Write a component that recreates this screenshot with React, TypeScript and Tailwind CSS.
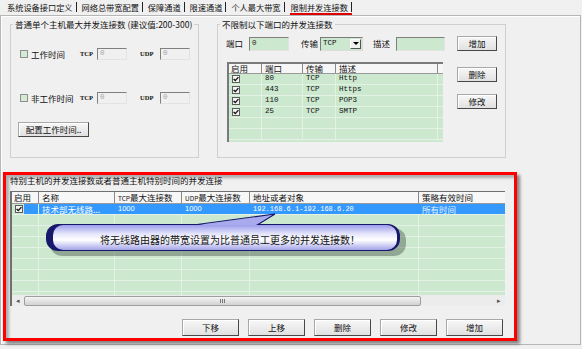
import React from "react";

const tabs = ["系统设备接口定义", "网络总带宽配置", "保障通道", "限速通道", "个人最大带宽", "限制并发连接数"];

const ports = [
  { port: "80", proto: "TCP", desc: "Http" },
  { port: "443", proto: "TCP", desc: "Https" },
  { port: "110", proto: "TCP", desc: "POP3" },
  { port: "25", proto: "TCP", desc: "SMTP" },
  null,
  null,
];

function Btn({ children, className = "" }: { children: React.ReactNode; className?: string }) {
  return (
    <div
      className={`flex items-center justify-center border border-[#a8a8a8] border-r-[#474747] border-b-[#474747] bg-gradient-to-b from-[#f7f7f7] to-[#e1e1e1] shadow-[inset_1px_1px_0_#fff] text-[8.5px] ${className}`}
    >
      {children}
    </div>
  );
}

function Check({ on, green }: { on?: boolean; green?: boolean }) {
  return (
    <div
      className={`w-[8px] h-[8px] shrink-0 flex items-center justify-center border ${
        green ? "border-[#8f8f8f] bg-[#d3ead3]" : "border-[#5c5c5c] bg-[#f4f4f4]"
      }`}
    >
      {on && (
        <svg width="6" height="6" viewBox="0 0 6 6">
          <path d="M0.6 2.9 L2.3 4.6 L5.4 1.1" stroke="#151515" strokeWidth="1.4" fill="none" />
        </svg>
      )}
    </div>
  );
}

function Field({ value, w, green }: { value?: string; w: string; green?: boolean }) {
  return (
    <div
      className={`${w} h-full flex items-center pl-[2px] border border-[#7f7f7f] border-r-[#e3e3e3] border-b-[#e3e3e3] font-['Liberation_Mono',monospace] text-[7.5px] ${
        green ? "bg-[#cce8cf] text-[#222]" : "bg-[#f0f0f0] text-[#a5a5a5]"
      }`}
    >
      {value}
    </div>
  );
}

function TimeRow({ label }: { label: string }) {
  return (
    <div className="flex items-center h-[12px]">
      <div className="w-[60px] ml-[9px] flex items-center">
        <Check green />
        <span className="ml-[3px]">{label}</span>
      </div>
      <span className="w-[17px] font-['Liberation_Serif',serif] font-bold text-[6.5px]">TCP</span>
      <Field value="0" w="w-[30px]" />
      <span className="w-[20px] ml-[13px] font-['Liberation_Serif',serif] font-bold text-[6.5px]">UDP</span>
      <Field value="0" w="w-[30px]" />
    </div>
  );
}

export default function App() {
  return (
    <div className="w-[582px] h-[349px] bg-[#f0f0f0] overflow-hidden font-['Noto_Sans_CJK_SC',sans-serif] text-[8.5px] leading-none text-[#111]">
      {/* tab strip */}
      <div className="h-[15px] flex items-start pt-[2px] pl-[7px] text-[8.2px]">
        {tabs.map((t, i) => (
          <div key={t} className="flex items-start h-[13px]">
            <span
              className={
                i === 5 ? "h-[13px] leading-[10px] pl-[1px] pr-[4px] -mr-[4px] border-b-2 border-[#e00000]" : "leading-[10px]"
              }
            >
              {t}
            </span>
            <span className="ml-[3px] mr-[5px] w-px h-[10px] bg-[#222]" />
          </div>
        ))}
      </div>

      {/* page */}
      <div className="w-[581px] h-[330px] border border-[#b6b6b6] shadow-[inset_1px_1px_0_#fff]">
        <div className="flex mt-[3px]">
          {/* left group */}
          <fieldset className="ml-[9px] w-[189px] h-[139px] border border-[#cfcfcf]">
            <legend className="ml-[2px] px-[2px] h-[10px] leading-[10px]">普通单个主机最大并发连接数 (建议值:200-300)</legend>
            <div className="mt-[19px]">
              <TimeRow label="工作时间" />
            </div>
            <div className="mt-[32px]">
              <TimeRow label="非工作时间" />
            </div>
            <Btn className="mt-[18px] ml-[7px] w-[71px] h-[15px]">配置工作时间..</Btn>
          </fieldset>

          {/* right group */}
          <fieldset className="ml-[18px] w-[289px] h-[139px] border border-[#cfcfcf]">
            <legend className="ml-[2px] px-[2px] h-[10px] leading-[10px]">不限制以下端口的并发连接数</legend>
            <div className="mt-[7px] flex items-center h-[15px]">
              <span className="ml-[8px] w-[23px]">端口</span>
              <div className="h-[14px]">
                <Field value="0" w="w-[40px]" green />
              </div>
              <span className="ml-[12px] w-[19px]">传输</span>
              <div className="w-[43px] h-[14px] flex items-center bg-[#cce8cf] border border-[#7a7a7a] border-r-[#dcdcdc] border-b-[#dcdcdc]">
                <span className="pl-[2px] flex-1 font-['Liberation_Mono',monospace] text-[7.5px]">TCP</span>
                <div className="w-[11px] h-[10px] mr-[1px] bg-[#f0f0f0] border border-white border-r-[#555] border-b-[#555] flex items-center justify-center">
                  <div className="w-0 h-0 border-l-[3px] border-r-[3px] border-t-[3px] border-l-transparent border-r-transparent border-t-black" />
                </div>
              </div>
              <span className="ml-[10px] w-[23px]">描述</span>
              <div className="h-[14px]">
                <Field w="w-[49px]" green />
              </div>
              <Btn className="ml-[12px] w-[40px] h-[15px]">增加</Btn>
            </div>

            <div className="mt-[11px] flex">
              <div className="ml-[9px] w-[216px] h-[80px] border-l-2 border-t-2 border-[#7a7a7a] bg-[#cce8cf] overflow-hidden">
                <div className="flex h-[10px] bg-[#f6f6f6] border-b border-[#9a9a9a] leading-[9px]">
                  <div className="w-[33px] pl-[2px] border-r border-[#8a8a8a]">启用</div>
                  <div className="w-[41px] pl-[3px] border-r border-[#8a8a8a]">端口</div>
                  <div className="w-[33px] pl-[3px] border-r border-[#8a8a8a]">传输</div>
                  <div className="w-[102px] pl-[3px] border-r border-[#8a8a8a]">描述</div>
                  <div className="flex-1" />
                </div>
                {ports.map((p, i) => (
                  <div key={i} className="flex h-[11px] border-b border-[#e4f2e5] font-['Liberation_Mono',monospace] text-[7.5px]">
                    <div className="w-[33px] pl-[3px] flex items-center border-r border-[#e4f2e5]">{p && <Check on />}</div>
                    <div className="w-[41px] pl-[3px] flex items-center border-r border-[#e4f2e5]">{p?.port}</div>
                    <div className="w-[33px] pl-[3px] flex items-center border-r border-[#e4f2e5]">{p?.proto}</div>
                    <div className="w-[102px] pl-[3px] flex items-center border-r border-[#e4f2e5]">{p?.desc}</div>
                    <div className="flex-1" />
                  </div>
                ))}
              </div>
              <div className="ml-[14px] flex flex-col">
                <Btn className="mt-[5px] w-[40px] h-[15px]">删除</Btn>
                <Btn className="mt-[12px] w-[40px] h-[15px]">修改</Btn>
              </div>
            </div>
          </fieldset>
        </div>

        {/* highlighted lower section */}
        <div className="relative mt-[14px] ml-[2px] w-[514px] h-[169px] border-[3px] border-[#ff0000] shadow-[3px_3px_3px_rgba(0,0,0,0.45),inset_3px_3px_3px_rgba(0,0,0,0.28)]">
          <div className="ml-[4px] h-[11px] leading-[11px]">特别主机的并发连接数或者普通主机特别时间的并发连接</div>

          <div className="mt-[5px] ml-[4px] w-[495px] h-[115px] border-l-2 border-t border-[#6f6f6f]">
            <div className="flex h-[12px] bg-[#f7f7f7] border-b border-[#9a9a9a] leading-[11px]">
              <div className="w-[27px] pl-[2px] border-r border-[#8a8a8a]">启用</div>
              <div className="w-[76px] pl-[3px] border-r border-[#8a8a8a]">名称</div>
              <div className="w-[67px] pl-[3px] border-r border-[#8a8a8a]">
                <span className="text-[6.5px]">TCP</span>最大连接数
              </div>
              <div className="w-[68px] pl-[3px] border-r border-[#8a8a8a]">
                <span className="text-[6.5px]">UDP</span>最大连接数
              </div>
              <div className="w-[169px] pl-[3px] border-r border-[#8a8a8a]">地址或者对象</div>
              <div className="flex-1 pl-[3px]">策略有效时间</div>
            </div>

            <div className="h-[91px] bg-[#cce8cf] overflow-hidden">
              <div className="flex h-[11px] border-b border-[#e4f2e5] text-white">
                <div className="w-[27px] flex items-center pl-[3px] border-r border-[#e4f2e5]">
                  <Check on />
                  <div className="ml-auto w-[14px] h-full bg-[#3399ff]" />
                </div>
                <div className="w-[76px] pl-[3px] flex items-center bg-[#3399ff]">技术部无线路...</div>
                <div className="w-[67px] pl-[3px] flex items-center bg-[#3399ff] font-['Liberation_Sans',sans-serif] text-[7.5px]">1000</div>
                <div className="w-[68px] pl-[3px] flex items-center bg-[#3399ff] font-['Liberation_Sans',sans-serif] text-[7.5px]">1000</div>
                <div className="w-[169px] pl-[3px] flex items-center bg-[#3399ff] font-['Liberation_Mono',monospace] text-[7px]">192.168.6.1-192.168.6.20</div>
                <div className="flex-1 pl-[3px] flex items-center bg-[#3399ff] text-[#e8f2ff]">所有时间</div>
              </div>
              {[0, 1, 2, 3, 4, 5, 6, 7].map((r) => (
                <div key={r} className="flex h-[11px] border-b border-[#e4f2e5]">
                  <div className="w-[27px] border-r border-[#e4f2e5]" />
                  <div className="w-[76px] border-r border-[#e4f2e5]" />
                  <div className="w-[67px] border-r border-[#e4f2e5]" />
                  <div className="w-[68px] border-r border-[#e4f2e5]" />
                  <div className="w-[169px] border-r border-[#e4f2e5]" />
                  <div className="flex-1" />
                </div>
              ))}
            </div>

            {/* horizontal scrollbar */}
            <div className="flex items-center h-[11px] bg-[#ececec] text-[7px] text-[#555]">
              <div className="w-[12px] flex justify-center">◂</div>
              <div className="w-[397px] h-[10px] rounded-[2px] border border-[#9e9e9e] bg-gradient-to-b from-[#f4f4f4] to-[#d2d2d2] flex items-center justify-center">
                <div className="flex gap-[1px]">
                  <div className="w-px h-[4px] bg-[#777]" />
                  <div className="w-px h-[4px] bg-[#777]" />
                  <div className="w-px h-[4px] bg-[#777]" />
                </div>
              </div>
              <div className="flex-1" />
              <div className="w-[12px] flex justify-center">▸</div>
            </div>
          </div>

          <div className="mt-[13px] flex justify-end gap-[9px] pr-[11px]">
            {["下移", "上移", "删除", "修改", "增加"].map((b) => (
              <Btn key={b} className="w-[57px] h-[17px]">
                {b}
              </Btn>
            ))}
          </div>

          {/* callout bubble */}
          <div className="absolute left-[38px] top-[36px] w-[362px] h-[46px]">
            <svg width="362" height="46" viewBox="0 0 362 46" className="absolute left-0 top-0">
              <defs>
                <linearGradient id="bub" x1="0" y1="0" x2="0" y2="1">
                  <stop offset="0" stopColor="#9d9dec" />
                  <stop offset="0.35" stopColor="#e4e4fb" />
                  <stop offset="0.6" stopColor="#ffffff" />
                  <stop offset="1" stopColor="#a3a3e8" />
                </linearGradient>
              </defs>
              <rect x="6" y="17" width="356" height="28" rx="12" fill="rgba(0,0,0,0.28)" />
              <rect x="2" y="13" width="354" height="27" rx="12" fill="#17176c" />
              <rect x="9" y="14" width="344" height="25" rx="10" fill="url(#bub)" />
              <polygon points="153,14 231,3 212,14" fill="#a9a9ee" />
              <polyline points="153,13.5 231,3 214,13.5" fill="none" stroke="#17176c" strokeWidth="1.1" />
            </svg>
            <div className="absolute left-[56px] top-[23px] h-[12px] leading-[12px] text-[10px] text-[#141414] whitespace-nowrap">
              将无线路由器的带宽设置为比普通员工更多的并发连接数！
            </div>
          </div>
        </div>
      </div>
    </div>
  );
}
